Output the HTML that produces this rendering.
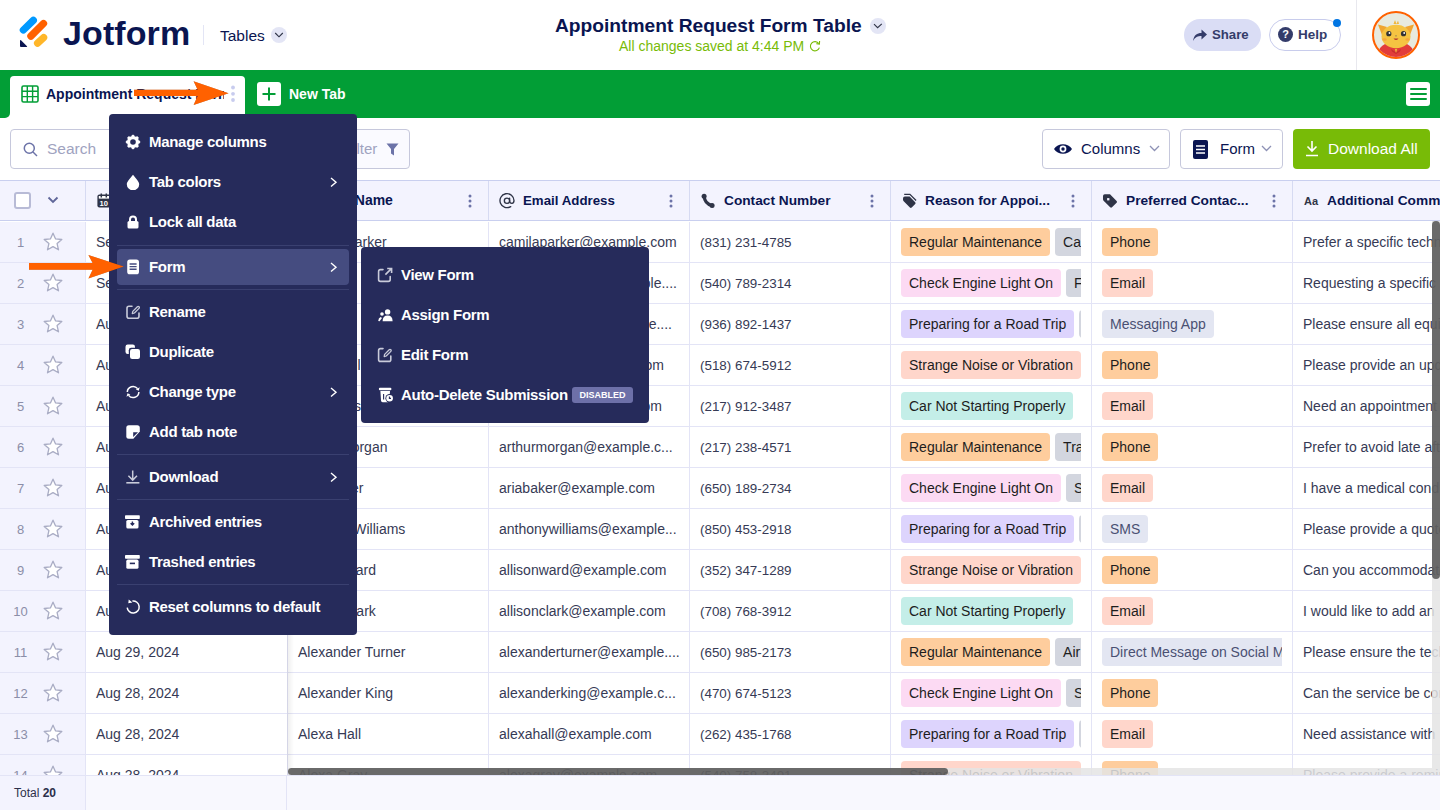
<!DOCTYPE html><html><head><meta charset="utf-8"><style>
*{box-sizing:border-box;margin:0;padding:0}
html,body{width:1440px;height:810px;overflow:hidden}
body{position:relative;font-family:"Liberation Sans",sans-serif;background:#fff;color:#0A1551}
.a{position:absolute}
.nw{white-space:nowrap}
svg{display:block}
/* header */
#hdr{left:0;top:0;width:1440px;height:70px;background:#fff}
#green{left:0;top:70px;width:1440px;height:48px;background:#029E36}
/* toolbar */
.btn{position:absolute;top:129px;height:40px;border:1px solid #C6C8DC;border-radius:4px;background:#fff}
/* table */
#thead{left:0;top:180px;width:1440px;height:41px;background:#F3F3FE;border-top:1px solid #C9CFEF;border-bottom:1px solid #C9CFEF}
.row{position:absolute;left:0;width:1440px;height:41px;border-bottom:1px solid #E3E4F6;background:#fff}
.rn{position:absolute;left:0;top:0;width:86px;height:40px;background:#F3F3FE;border-right:1px solid #E3E4F6}
.cd{position:absolute;top:0;height:40px;border-right:1px solid #E3E4F6}
.ct{position:absolute;top:12px;font-size:14px;color:#363A55;white-space:nowrap;line-height:17px}
.hl{position:absolute;top:12px;font-size:14px;font-weight:700;color:#0A1551;white-space:nowrap;line-height:17px}
.tags{position:absolute;top:6px;left:0;display:flex;gap:5px;white-space:nowrap}
.tag{flex:none;height:28px;border-radius:4px;font-size:14px;line-height:28px;color:#1D1D1D;padding:0 8px;white-space:nowrap}
/* menu */
.menu{position:absolute;background:#262B5B;border-radius:4px}
.mi{position:absolute;left:0;height:40px;width:100%;color:#fff;font-weight:700;font-size:15px;letter-spacing:-0.3px;white-space:nowrap}
.mi span.t{position:absolute;left:40px;top:11px;line-height:18px}
.sep{position:absolute;left:8px;right:8px;height:1px;background:#3A4070}
</style></head><body>
<div id="hdr" class="a"></div>
<div class="a" style="left:0;top:0"><svg width="60" height="60" viewBox="0 0 60 60" ><path d="M23.4 30 L33.3 20.4" stroke="#0099FF" stroke-width="7.3" stroke-linecap="round"/><path d="M30.9 36.1 L43.5 23.5" stroke="#FF6100" stroke-width="7.3" stroke-linecap="round"/><path d="M37.6 43.2 L43.6 37.6" stroke="#FFB629" stroke-width="7.3" stroke-linecap="round"/><path d="M21 40.2 Q20 39.8 20 41 L20 46 Q20 47 21 47 L26.5 47 Q27.6 47 27 46.2 Z" fill="#0A1551"/></svg></div>
<div class="a nw" style="left:63px;top:13px;font-size:34px;font-weight:700;color:#0A1551;letter-spacing:0.1px;line-height:40px">Jotform</div>
<div class="a" style="left:203px;top:25px;width:1px;height:20px;background:#E3E5F5"></div>
<div class="a nw" style="left:220px;top:27px;font-size:15.5px;color:#0A1551;line-height:18px">Tables</div>
<div class="a" style="left:271px;top:27px;width:16px;height:16px;border-radius:50%;background:#E3E5F5"></div>
<div class="a" style="left:274px;top:31px"><svg width="10" height="8" viewBox="0 0 10 8" ><path d="M1.2 2 L5 5.8 L8.8 2" stroke="#2F3447" stroke-width="1.15" fill="none"/></svg></div>
<div class="a nw" style="left:555px;top:15px;font-size:19.2px;font-weight:700;color:#0A1551;line-height:22px">Appointment Request Form Table</div>
<div class="a" style="left:870px;top:18px;width:16px;height:16px;border-radius:50%;background:#E3E5F5"></div>
<div class="a" style="left:873px;top:22px"><svg width="10" height="8" viewBox="0 0 10 8" ><path d="M1 2.2 L4.6 5.6 L8.8 1.9" stroke="#2F3447" stroke-width="1.15" fill="none"/></svg></div>
<div class="a nw" style="left:619px;top:38px;font-size:14px;color:#78BB07;line-height:16px">All changes saved at 4:44 PM</div>
<div class="a" style="left:809px;top:40px"><svg width="12" height="12" viewBox="0 0 12 12" ><path d="M9.8 3.6 A4.6 4.6 0 1 0 10.4 7.6" stroke="#78BB07" stroke-width="1.1" fill="none"/><path d="M10.6 1 L10.4 4.2 L7.4 3.6" stroke="#78BB07" stroke-width="1.1" fill="none"/></svg></div>
<div class="a" style="left:1184px;top:19px;width:77px;height:32px;border-radius:16px;background:#DADDF5"></div>
<div class="a" style="left:1192px;top:28px"><svg width="16" height="14" viewBox="0 0 16 14" ><path d="M1 13 C2 7 5 5 9.5 5 L9.5 1.5 L15 6.5 L9.5 11.5 L9.5 8 C6 8 3 9 1 13 Z" fill="#343C6A"/></svg></div>
<div class="a nw" style="left:1212px;top:27px;font-size:13.2px;font-weight:700;color:#343C6A;line-height:16px">Share</div>
<div class="a" style="left:1269px;top:19px;width:72px;height:32px;border-radius:16px;background:#fff;border:1px solid #C8CCEC"></div>
<div class="a" style="left:1278px;top:27px;width:15px;height:15px;border-radius:50%;background:#343C6A;color:#fff;font-size:11px;font-weight:700;text-align:center;line-height:15px">?</div>
<div class="a nw" style="left:1298px;top:27px;font-size:13.5px;font-weight:700;color:#343C6A;line-height:16px">Help</div>
<div class="a" style="left:1333px;top:19px;width:8px;height:8px;border-radius:50%;background:#0075E3"></div>
<div class="a" style="left:1356px;top:0;width:1px;height:70px;background:#E8E8EE"></div>
<div class="a" style="left:1372px;top:11px"><svg width="48" height="48" viewBox="0 0 48 48" ><circle cx="24" cy="24" r="23" fill="#E8EADF" stroke="#FF6100" stroke-width="2"/><clipPath id="av"><circle cx="24" cy="24" r="22"/></clipPath><g clip-path="url(#av)"><path d="M5 48 Q5 31 24 31 Q43 31 43 48 Z" fill="#E23C3A"/><path d="M6 13.5 L15 16 L10 24 Z" fill="#F0A531"/><path d="M42 13.5 L33 16 L38 24 Z" fill="#F0A531"/><path d="M21.5 13 L23 9 L24.5 13 L26 9.5 L27 13 Z" fill="#F0B73A"/><ellipse cx="24" cy="25.5" rx="14.5" ry="11.8" fill="#F5C342"/><ellipse cx="12.5" cy="28.5" rx="2.2" ry="1.2" fill="#F6A53E"/><ellipse cx="35.5" cy="28.5" rx="2.2" ry="1.2" fill="#F6A53E"/><circle cx="16.8" cy="22.7" r="2.6" fill="#333"/><circle cx="31.5" cy="22.7" r="2.6" fill="#333"/><circle cx="17.5" cy="22" r="0.9" fill="#fff"/><circle cx="32.2" cy="22" r="0.9" fill="#fff"/><path d="M23.2 25.2 L24 24 L24.8 25.2 Z" fill="#555"/><path d="M21.5 27.5 Q24 30.5 26.5 27.5 Z" fill="#B23A2E"/><path d="M19 38 L24 41.5 L29 38 L28 40.5 L24 43 L20 40.5 Z" fill="#C62F2C"/><path d="M22.8 38 L24 42 L25.2 38 Z" fill="#F0B73A"/></g></svg></div>
<div id="green" class="a"></div>
<div class="a" style="left:10px;top:76px;width:235px;height:42px;background:#fff;border-radius:4px 4px 0 0"></div>
<div class="a" style="left:4px;top:110px;width:8px;height:8px;background:#fff"></div>
<div class="a" style="left:0;top:100px;width:10px;height:18px;background:#029E36;border-bottom-right-radius:5px"></div>
<div class="a" style="left:21px;top:85px"><svg width="18" height="18" viewBox="0 0 18 18" ><rect x="1" y="1" width="16" height="16" rx="1.5" fill="none" stroke="#029E36" stroke-width="1.6"/><path d="M1 6.3 H17 M1 11.6 H17 M6.3 1 V17 M11.6 1 V17" stroke="#029E36" stroke-width="1.4"/></svg></div>
<div class="a nw" style="left:46px;top:86px;width:178px;overflow:hidden;font-size:14px;font-weight:700;color:#0A1551;line-height:17px">Appointment Request Form</div>
<div class="a" style="left:230px;top:85px"><svg width="6" height="17" viewBox="0 0 6 17" ><circle cx="3" cy="2.5" r="1.9" fill="#C8CCEE"/><circle cx="3" cy="8.8" r="1.9" fill="#C8CCEE"/><circle cx="3" cy="15" r="1.9" fill="#C8CCEE"/></svg></div>
<div class="a" style="left:257px;top:82px;width:24px;height:24px;border-radius:3px;background:#fff"></div>
<div class="a" style="left:261px;top:86px"><svg width="16" height="16" viewBox="0 0 16 16" ><path d="M8 1.5 V14.5 M1.5 8 H14.5" stroke="#029E36" stroke-width="2"/></svg></div>
<div class="a nw" style="left:289px;top:86px;font-size:14px;font-weight:700;color:#fff;line-height:17px">New Tab</div>
<div class="a" style="left:1406px;top:82px;width:24px;height:24px;border-radius:3px;background:#fff"></div>
<div class="a" style="left:1410px;top:88px"><svg width="17" height="13" viewBox="0 0 17 13" ><path d="M1 1 H16 M1 6 H16 M1 11 H16" stroke="#029E36" stroke-width="2" stroke-linecap="round"/></svg></div>
<div class="btn" style="left:10px;width:300px"></div>
<div class="a" style="left:23px;top:142px"><svg width="15" height="15" viewBox="0 0 15 15" ><circle cx="6.3" cy="6.3" r="5" fill="none" stroke="#6C73A8" stroke-width="1.5"/><path d="M10 10 L14 14" stroke="#6C73A8" stroke-width="1.5"/></svg></div>
<div class="a nw" style="left:47px;top:140px;font-size:15.5px;color:#A0A3BF;line-height:18px">Search</div>
<div class="btn" style="left:309px;width:101px;background:#FAFAFF"></div>
<div class="a nw" style="left:344px;top:140px;font-size:15px;color:#A0A3BF;line-height:18px">Filter</div>
<div class="a" style="left:386px;top:143px"><svg width="13" height="13" viewBox="0 0 13 13" ><path d="M0.5 0.5 H12.5 L8 6 V12.5 L5 10.5 V6 Z" fill="#6C73A8"/></svg></div>
<div class="btn" style="left:1042px;width:128px"></div>
<div class="a" style="left:1053px;top:142px"><svg width="20" height="14" viewBox="0 0 20 14" ><path d="M1 7 C4.5 0.6 15.5 0.6 19 7 C15.5 13.4 4.5 13.4 1 7 Z" fill="#0A1551"/><circle cx="10" cy="7" r="3.4" fill="#fff"/><circle cx="10" cy="7" r="1.7" fill="#0A1551"/></svg></div>
<div class="a nw" style="left:1081px;top:140px;font-size:15px;color:#0A1551;line-height:18px">Columns</div>
<div class="a" style="left:1149px;top:145px"><svg width="11" height="7" viewBox="0 0 11 7" ><path d="M1 1 L5.5 5.5 L10 1" stroke="#8D91B5" stroke-width="1.3" fill="none"/></svg></div>
<div class="btn" style="left:1180px;width:103px"></div>
<div class="a" style="left:1193px;top:140px;width:15px;height:19px;border-radius:2px;background:#0A1551"></div>
<div class="a" style="left:1196px;top:145px"><svg width="9" height="9" viewBox="0 0 9 9" ><path d="M0 1 H9 M0 4.5 H9 M0 8 H9" stroke="#fff" stroke-width="1.5"/></svg></div>
<div class="a nw" style="left:1220px;top:140px;font-size:15px;color:#0A1551;line-height:18px">Form</div>
<div class="a" style="left:1261px;top:145px"><svg width="11" height="7" viewBox="0 0 11 7" ><path d="M1 1 L5.5 5.5 L10 1" stroke="#8D91B5" stroke-width="1.3" fill="none"/></svg></div>
<div class="a" style="left:1293px;top:129px;width:137px;height:40px;border-radius:4px;background:#78BB07"></div>
<div class="a" style="left:1305px;top:140px"><svg width="14" height="17" viewBox="0 0 14 17" ><path d="M7 1 V11 M2.5 6.5 L7 11 L11.5 6.5 M1 15.5 H13" stroke="#fff" stroke-width="1.6" fill="none"/></svg></div>
<div class="a nw" style="left:1328px;top:140px;font-size:15.5px;color:#fff;line-height:18px">Download All</div>
<div id="thead" class="a"></div>
<div class="a" style="left:287px;top:181px;width:1px;height:39px;background:#D6DAF2"></div>
<div class="a" style="left:488px;top:181px;width:1px;height:39px;background:#D6DAF2"></div>
<div class="a" style="left:689px;top:181px;width:1px;height:39px;background:#D6DAF2"></div>
<div class="a" style="left:890px;top:181px;width:1px;height:39px;background:#D6DAF2"></div>
<div class="a" style="left:1091px;top:181px;width:1px;height:39px;background:#D6DAF2"></div>
<div class="a" style="left:1292px;top:181px;width:1px;height:39px;background:#D6DAF2"></div>
<div class="a" style="left:85px;top:181px;width:1px;height:39px;background:#D6DAF2"></div>
<div class="a" style="left:14px;top:192px;width:17px;height:17px;border:2px solid #B8BBD6;border-radius:3px;background:#fff"></div>
<div class="a" style="left:47px;top:196px"><svg width="12" height="8" viewBox="0 0 12 8" ><path d="M1.5 1.5 L6 6 L10.5 1.5" stroke="#5F6699" stroke-width="1.8" fill="none"/></svg></div>
<div class="a" style="left:97px;top:193px"><svg width="14" height="15" viewBox="0 0 14 15" ><rect x="0.4" y="1.6" width="13.2" height="13" rx="2" fill="#2F3447"/><rect x="1.8" y="3" width="10.4" height="2.6" fill="#fff"/><path d="M4.3 0.4 V4.6 M9.3 0.4 V4.6" stroke="#2F3447" stroke-width="1.5"/><text x="6.8" y="13.2" font-size="7.6" font-weight="700" fill="#fff" text-anchor="middle" font-family="Liberation Sans">10</text></svg></div>
<div class="a nw" style="left:125px;top:192px;font-size:14px;font-weight:700;color:#0A1551;line-height:17px">Date</div>
<div class="a nw" style="left:326px;top:192px;font-size:14px;font-weight:700;color:#0A1551;line-height:17px">Full Name</div>
<div class="a" style="left:498px;top:192px"><svg width="18" height="18" viewBox="0 0 18 18" ><path d="M12.7 14.6 A7 7 0 1 1 16 8.6 Q16 11.3 14 11.3 Q11.6 11.3 11.6 9 V6.2" stroke="#2F3447" stroke-width="1.35" fill="none" stroke-linecap="round"/><circle cx="9" cy="8.7" r="2.65" stroke="#2F3447" stroke-width="1.35" fill="none"/></svg></div>
<div class="a nw" style="left:523px;top:192px;font-size:13.3px;font-weight:700;color:#0A1551;line-height:17px">Email Address</div>
<div class="a" style="left:700px;top:193px"><svg width="16" height="16" viewBox="0 0 16 16" ><path d="M4.2 3.4 Q4.6 10.6 12 12.6" stroke="#2F3447" stroke-width="3.2" fill="none" stroke-linecap="round"/><circle cx="4.1" cy="3.3" r="2.5" fill="#2F3447"/><circle cx="12.1" cy="12.6" r="2.5" fill="#2F3447"/></svg></div>
<div class="a nw" style="left:724px;top:192px;font-size:13.7px;font-weight:700;color:#0A1551;line-height:17px">Contact Number</div>
<div class="a" style="left:900px;top:190px"><svg width="18" height="20" viewBox="0 0 18 20" ><path d="M3 8.5 Q3 6.6 4.9 6.6 L9.6 6.6 L15.2 12.2 Q16 13.1 15.2 14 L11.7 17.5 Q10.8 18.4 9.9 17.5 L3.7 11.3 Q3 10.6 3 9.7 Z" fill="#2F3447"/><path d="M4.2 4.3 H9.9 L16.1 10.5" stroke="#2F3447" stroke-width="1.3" fill="none"/></svg></div>
<div class="a nw" style="left:925px;top:192px;font-size:13.7px;font-weight:700;color:#0A1551;line-height:17px">Reason for Appoi...</div>
<div class="a" style="left:1100px;top:190px"><svg width="18" height="20" viewBox="0 0 18 20" ><path d="M3 6.1 Q3 4.3 4.8 4.3 L10 4.3 L16.6 10.9 Q17.5 11.8 16.6 12.7 L12 17.3 Q11.1 18.2 10.2 17.3 L3.6 10.7 Q3 10.1 3 9.2 Z" fill="#2F3447"/><rect x="7.1" y="8.1" width="2.3" height="2.3" fill="#F3F3FE"/></svg></div>
<div class="a nw" style="left:1126px;top:192px;font-size:13.7px;font-weight:700;color:#0A1551;line-height:17px">Preferred Contac...</div>
<div class="a nw" style="left:1304px;top:195px;font-size:11px;font-weight:700;color:#2F3447;line-height:13px">Aa</div>
<div class="a nw" style="left:1327px;top:192px;font-size:13.7px;font-weight:700;color:#0A1551;line-height:17px">Additional Comments</div>
<div class="a" style="left:267px;top:194px"><svg width="4" height="14" viewBox="0 0 4 14" ><circle cx="2" cy="2" r="1.5" fill="#6C73A8"/><circle cx="2" cy="7" r="1.5" fill="#6C73A8"/><circle cx="2" cy="12" r="1.5" fill="#6C73A8"/></svg></div>
<div class="a" style="left:468px;top:194px"><svg width="4" height="14" viewBox="0 0 4 14" ><circle cx="2" cy="2" r="1.5" fill="#6C73A8"/><circle cx="2" cy="7" r="1.5" fill="#6C73A8"/><circle cx="2" cy="12" r="1.5" fill="#6C73A8"/></svg></div>
<div class="a" style="left:669px;top:194px"><svg width="4" height="14" viewBox="0 0 4 14" ><circle cx="2" cy="2" r="1.5" fill="#6C73A8"/><circle cx="2" cy="7" r="1.5" fill="#6C73A8"/><circle cx="2" cy="12" r="1.5" fill="#6C73A8"/></svg></div>
<div class="a" style="left:870px;top:194px"><svg width="4" height="14" viewBox="0 0 4 14" ><circle cx="2" cy="2" r="1.5" fill="#6C73A8"/><circle cx="2" cy="7" r="1.5" fill="#6C73A8"/><circle cx="2" cy="12" r="1.5" fill="#6C73A8"/></svg></div>
<div class="a" style="left:1071px;top:194px"><svg width="4" height="14" viewBox="0 0 4 14" ><circle cx="2" cy="2" r="1.5" fill="#6C73A8"/><circle cx="2" cy="7" r="1.5" fill="#6C73A8"/><circle cx="2" cy="12" r="1.5" fill="#6C73A8"/></svg></div>
<div class="a" style="left:1272px;top:194px"><svg width="4" height="14" viewBox="0 0 4 14" ><circle cx="2" cy="2" r="1.5" fill="#6C73A8"/><circle cx="2" cy="7" r="1.5" fill="#6C73A8"/><circle cx="2" cy="12" r="1.5" fill="#6C73A8"/></svg></div>
<div class="a" style="left:0;top:222px;width:1440px;height:553px;overflow:hidden">
<div class="row" style="top:0px">
<div class="rn"></div>
<div class="a nw" style="left:0;width:41px;top:12px;text-align:center;font-size:13px;color:#8B8EA8;line-height:17px">1</div>
<div class="a" style="left:43px;top:10px"><svg width="20" height="19" viewBox="0 0 20 19" ><path d="M10 1.2 L12.6 6.9 L18.8 7.5 L14.1 11.6 L15.5 17.8 L10 14.6 L4.5 17.8 L5.9 11.6 L1.2 7.5 L7.4 6.9 Z" fill="#fff" stroke="#A9ACC4" stroke-width="1.3" stroke-linejoin="round"/></svg></div>
<div class="a" style="left:287px;top:0;width:1px;height:40px;background:#E3E4F6"></div>
<div class="a" style="left:488px;top:0;width:1px;height:40px;background:#E3E4F6"></div>
<div class="a" style="left:689px;top:0;width:1px;height:40px;background:#E3E4F6"></div>
<div class="a" style="left:890px;top:0;width:1px;height:40px;background:#E3E4F6"></div>
<div class="a" style="left:1091px;top:0;width:1px;height:40px;background:#E3E4F6"></div>
<div class="a" style="left:1292px;top:0;width:1px;height:40px;background:#E3E4F6"></div>
<div class="ct" style="left:96px">Sep 11, 2024</div>
<div class="ct" style="left:298px">Camila Parker</div>
<div class="ct" style="left:499px;width:182px;overflow:hidden">camilaparker@example.com</div>
<div class="ct" style="left:700px;font-size:13.4px">(831) 231-4785</div>
<div class="a" style="left:901px;top:0;width:180px;height:40px;overflow:hidden"><div class="tags">
<div class="tag" style="background:#FECD9D">Regular Maintenance</div>
<div class="tag" style="background:#D3D6DF">Car Wash</div>
</div></div>
<div class="a" style="left:1102px;top:0;width:180px;height:40px;overflow:hidden"><div class="tags">
<div class="tag" style="background:#FECD9D;color:#1D1D1D">Phone</div>
</div></div>
<div class="ct" style="left:1303px">Prefer a specific technician</div>
</div>
<div class="row" style="top:41px">
<div class="rn"></div>
<div class="a nw" style="left:0;width:41px;top:12px;text-align:center;font-size:13px;color:#8B8EA8;line-height:17px">2</div>
<div class="a" style="left:43px;top:10px"><svg width="20" height="19" viewBox="0 0 20 19" ><path d="M10 1.2 L12.6 6.9 L18.8 7.5 L14.1 11.6 L15.5 17.8 L10 14.6 L4.5 17.8 L5.9 11.6 L1.2 7.5 L7.4 6.9 Z" fill="#fff" stroke="#A9ACC4" stroke-width="1.3" stroke-linejoin="round"/></svg></div>
<div class="a" style="left:287px;top:0;width:1px;height:40px;background:#E3E4F6"></div>
<div class="a" style="left:488px;top:0;width:1px;height:40px;background:#E3E4F6"></div>
<div class="a" style="left:689px;top:0;width:1px;height:40px;background:#E3E4F6"></div>
<div class="a" style="left:890px;top:0;width:1px;height:40px;background:#E3E4F6"></div>
<div class="a" style="left:1091px;top:0;width:1px;height:40px;background:#E3E4F6"></div>
<div class="a" style="left:1292px;top:0;width:1px;height:40px;background:#E3E4F6"></div>
<div class="ct" style="left:96px">Sep 10, 2024</div>
<div class="ct" style="left:298px">Ava Fox</div>
<div class="ct" style="left:377px;width:300px;text-align:right">cameronscott@example....</div>
<div class="ct" style="left:700px;font-size:13.4px">(540) 789-2314</div>
<div class="a" style="left:901px;top:0;width:180px;height:40px;overflow:hidden"><div class="tags">
<div class="tag" style="background:#FCDAF3">Check Engine Light On</div>
<div class="tag" style="background:#D3D6DF">Fluids</div>
</div></div>
<div class="a" style="left:1102px;top:0;width:180px;height:40px;overflow:hidden"><div class="tags">
<div class="tag" style="background:#FFD6CB;color:#1D1D1D">Email</div>
</div></div>
<div class="ct" style="left:1303px">Requesting a specific time</div>
</div>
<div class="row" style="top:82px">
<div class="rn"></div>
<div class="a nw" style="left:0;width:41px;top:12px;text-align:center;font-size:13px;color:#8B8EA8;line-height:17px">3</div>
<div class="a" style="left:43px;top:10px"><svg width="20" height="19" viewBox="0 0 20 19" ><path d="M10 1.2 L12.6 6.9 L18.8 7.5 L14.1 11.6 L15.5 17.8 L10 14.6 L4.5 17.8 L5.9 11.6 L1.2 7.5 L7.4 6.9 Z" fill="#fff" stroke="#A9ACC4" stroke-width="1.3" stroke-linejoin="round"/></svg></div>
<div class="a" style="left:287px;top:0;width:1px;height:40px;background:#E3E4F6"></div>
<div class="a" style="left:488px;top:0;width:1px;height:40px;background:#E3E4F6"></div>
<div class="a" style="left:689px;top:0;width:1px;height:40px;background:#E3E4F6"></div>
<div class="a" style="left:890px;top:0;width:1px;height:40px;background:#E3E4F6"></div>
<div class="a" style="left:1091px;top:0;width:1px;height:40px;background:#E3E4F6"></div>
<div class="a" style="left:1292px;top:0;width:1px;height:40px;background:#E3E4F6"></div>
<div class="ct" style="left:96px">Aug 31, 2024</div>
<div class="ct" style="left:298px">Bo Li</div>
<div class="ct" style="left:372px;width:300px;text-align:right">benjaminhill@example....</div>
<div class="ct" style="left:700px;font-size:13.4px">(936) 892-1437</div>
<div class="a" style="left:901px;top:0;width:180px;height:40px;overflow:hidden"><div class="tags">
<div class="tag" style="background:#DDD4FD">Preparing for a Road Trip</div>
<div class="tag" style="background:#D3D6DF">Oil</div>
</div></div>
<div class="a" style="left:1102px;top:0;width:180px;height:40px;overflow:hidden"><div class="tags">
<div class="tag" style="background:#E3E6F2;color:#4A5072">Messaging App</div>
</div></div>
<div class="ct" style="left:1303px">Please ensure all equipment</div>
</div>
<div class="row" style="top:123px">
<div class="rn"></div>
<div class="a nw" style="left:0;width:41px;top:12px;text-align:center;font-size:13px;color:#8B8EA8;line-height:17px">4</div>
<div class="a" style="left:43px;top:10px"><svg width="20" height="19" viewBox="0 0 20 19" ><path d="M10 1.2 L12.6 6.9 L18.8 7.5 L14.1 11.6 L15.5 17.8 L10 14.6 L4.5 17.8 L5.9 11.6 L1.2 7.5 L7.4 6.9 Z" fill="#fff" stroke="#A9ACC4" stroke-width="1.3" stroke-linejoin="round"/></svg></div>
<div class="a" style="left:287px;top:0;width:1px;height:40px;background:#E3E4F6"></div>
<div class="a" style="left:488px;top:0;width:1px;height:40px;background:#E3E4F6"></div>
<div class="a" style="left:689px;top:0;width:1px;height:40px;background:#E3E4F6"></div>
<div class="a" style="left:890px;top:0;width:1px;height:40px;background:#E3E4F6"></div>
<div class="a" style="left:1091px;top:0;width:1px;height:40px;background:#E3E4F6"></div>
<div class="a" style="left:1292px;top:0;width:1px;height:40px;background:#E3E4F6"></div>
<div class="ct" style="left:96px">Aug 31, 2024</div>
<div class="ct" style="left:60.5px;width:300px;text-align:right">Ava Mitchell</div>
<div class="ct" style="left:364px;width:300px;text-align:right">avamitchell@example.com</div>
<div class="ct" style="left:700px;font-size:13.4px">(518) 674-5912</div>
<div class="a" style="left:901px;top:0;width:180px;height:40px;overflow:hidden"><div class="tags">
<div class="tag" style="background:#FFD6CB">Strange Noise or Vibration</div>
</div></div>
<div class="a" style="left:1102px;top:0;width:180px;height:40px;overflow:hidden"><div class="tags">
<div class="tag" style="background:#FECD9D;color:#1D1D1D">Phone</div>
</div></div>
<div class="ct" style="left:1303px">Please provide an update</div>
</div>
<div class="row" style="top:164px">
<div class="rn"></div>
<div class="a nw" style="left:0;width:41px;top:12px;text-align:center;font-size:13px;color:#8B8EA8;line-height:17px">5</div>
<div class="a" style="left:43px;top:10px"><svg width="20" height="19" viewBox="0 0 20 19" ><path d="M10 1.2 L12.6 6.9 L18.8 7.5 L14.1 11.6 L15.5 17.8 L10 14.6 L4.5 17.8 L5.9 11.6 L1.2 7.5 L7.4 6.9 Z" fill="#fff" stroke="#A9ACC4" stroke-width="1.3" stroke-linejoin="round"/></svg></div>
<div class="a" style="left:287px;top:0;width:1px;height:40px;background:#E3E4F6"></div>
<div class="a" style="left:488px;top:0;width:1px;height:40px;background:#E3E4F6"></div>
<div class="a" style="left:689px;top:0;width:1px;height:40px;background:#E3E4F6"></div>
<div class="a" style="left:890px;top:0;width:1px;height:40px;background:#E3E4F6"></div>
<div class="a" style="left:1091px;top:0;width:1px;height:40px;background:#E3E4F6"></div>
<div class="a" style="left:1292px;top:0;width:1px;height:40px;background:#E3E4F6"></div>
<div class="ct" style="left:96px">Aug 30, 2024</div>
<div class="ct" style="left:61px;width:300px;text-align:right">Audrey Hughes</div>
<div class="ct" style="left:362px;width:300px;text-align:right">audreyhughes@example.com</div>
<div class="ct" style="left:700px;font-size:13.4px">(217) 912-3487</div>
<div class="a" style="left:901px;top:0;width:180px;height:40px;overflow:hidden"><div class="tags">
<div class="tag" style="background:#C4EEE8">Car Not Starting Properly</div>
</div></div>
<div class="a" style="left:1102px;top:0;width:180px;height:40px;overflow:hidden"><div class="tags">
<div class="tag" style="background:#FFD6CB;color:#1D1D1D">Email</div>
</div></div>
<div class="ct" style="left:1303px">Need an appointment soon</div>
</div>
<div class="row" style="top:205px">
<div class="rn"></div>
<div class="a nw" style="left:0;width:41px;top:12px;text-align:center;font-size:13px;color:#8B8EA8;line-height:17px">6</div>
<div class="a" style="left:43px;top:10px"><svg width="20" height="19" viewBox="0 0 20 19" ><path d="M10 1.2 L12.6 6.9 L18.8 7.5 L14.1 11.6 L15.5 17.8 L10 14.6 L4.5 17.8 L5.9 11.6 L1.2 7.5 L7.4 6.9 Z" fill="#fff" stroke="#A9ACC4" stroke-width="1.3" stroke-linejoin="round"/></svg></div>
<div class="a" style="left:287px;top:0;width:1px;height:40px;background:#E3E4F6"></div>
<div class="a" style="left:488px;top:0;width:1px;height:40px;background:#E3E4F6"></div>
<div class="a" style="left:689px;top:0;width:1px;height:40px;background:#E3E4F6"></div>
<div class="a" style="left:890px;top:0;width:1px;height:40px;background:#E3E4F6"></div>
<div class="a" style="left:1091px;top:0;width:1px;height:40px;background:#E3E4F6"></div>
<div class="a" style="left:1292px;top:0;width:1px;height:40px;background:#E3E4F6"></div>
<div class="ct" style="left:96px">Aug 30, 2024</div>
<div class="ct" style="left:298px">Arthur Morgan</div>
<div class="ct" style="left:499px;width:182px;overflow:hidden">arthurmorgan@example.c...</div>
<div class="ct" style="left:700px;font-size:13.4px">(217) 238-4571</div>
<div class="a" style="left:901px;top:0;width:180px;height:40px;overflow:hidden"><div class="tags">
<div class="tag" style="background:#FECD9D">Regular Maintenance</div>
<div class="tag" style="background:#D3D6DF">Transmission</div>
</div></div>
<div class="a" style="left:1102px;top:0;width:180px;height:40px;overflow:hidden"><div class="tags">
<div class="tag" style="background:#FECD9D;color:#1D1D1D">Phone</div>
</div></div>
<div class="ct" style="left:1303px">Prefer to avoid late afternoon</div>
</div>
<div class="row" style="top:246px">
<div class="rn"></div>
<div class="a nw" style="left:0;width:41px;top:12px;text-align:center;font-size:13px;color:#8B8EA8;line-height:17px">7</div>
<div class="a" style="left:43px;top:10px"><svg width="20" height="19" viewBox="0 0 20 19" ><path d="M10 1.2 L12.6 6.9 L18.8 7.5 L14.1 11.6 L15.5 17.8 L10 14.6 L4.5 17.8 L5.9 11.6 L1.2 7.5 L7.4 6.9 Z" fill="#fff" stroke="#A9ACC4" stroke-width="1.3" stroke-linejoin="round"/></svg></div>
<div class="a" style="left:287px;top:0;width:1px;height:40px;background:#E3E4F6"></div>
<div class="a" style="left:488px;top:0;width:1px;height:40px;background:#E3E4F6"></div>
<div class="a" style="left:689px;top:0;width:1px;height:40px;background:#E3E4F6"></div>
<div class="a" style="left:890px;top:0;width:1px;height:40px;background:#E3E4F6"></div>
<div class="a" style="left:1091px;top:0;width:1px;height:40px;background:#E3E4F6"></div>
<div class="a" style="left:1292px;top:0;width:1px;height:40px;background:#E3E4F6"></div>
<div class="ct" style="left:96px">Aug 30, 2024</div>
<div class="ct" style="left:298px">Aria Baker</div>
<div class="ct" style="left:499px;width:182px;overflow:hidden">ariabaker@example.com</div>
<div class="ct" style="left:700px;font-size:13.4px">(650) 189-2734</div>
<div class="a" style="left:901px;top:0;width:180px;height:40px;overflow:hidden"><div class="tags">
<div class="tag" style="background:#FCDAF3">Check Engine Light On</div>
<div class="tag" style="background:#D3D6DF">Service</div>
</div></div>
<div class="a" style="left:1102px;top:0;width:180px;height:40px;overflow:hidden"><div class="tags">
<div class="tag" style="background:#FFD6CB;color:#1D1D1D">Email</div>
</div></div>
<div class="ct" style="left:1303px">I have a medical condition</div>
</div>
<div class="row" style="top:287px">
<div class="rn"></div>
<div class="a nw" style="left:0;width:41px;top:12px;text-align:center;font-size:13px;color:#8B8EA8;line-height:17px">8</div>
<div class="a" style="left:43px;top:10px"><svg width="20" height="19" viewBox="0 0 20 19" ><path d="M10 1.2 L12.6 6.9 L18.8 7.5 L14.1 11.6 L15.5 17.8 L10 14.6 L4.5 17.8 L5.9 11.6 L1.2 7.5 L7.4 6.9 Z" fill="#fff" stroke="#A9ACC4" stroke-width="1.3" stroke-linejoin="round"/></svg></div>
<div class="a" style="left:287px;top:0;width:1px;height:40px;background:#E3E4F6"></div>
<div class="a" style="left:488px;top:0;width:1px;height:40px;background:#E3E4F6"></div>
<div class="a" style="left:689px;top:0;width:1px;height:40px;background:#E3E4F6"></div>
<div class="a" style="left:890px;top:0;width:1px;height:40px;background:#E3E4F6"></div>
<div class="a" style="left:1091px;top:0;width:1px;height:40px;background:#E3E4F6"></div>
<div class="a" style="left:1292px;top:0;width:1px;height:40px;background:#E3E4F6"></div>
<div class="ct" style="left:96px">Aug 29, 2024</div>
<div class="ct" style="left:298px">Anthony Williams</div>
<div class="ct" style="left:499px;width:182px;overflow:hidden">anthonywilliams@example...</div>
<div class="ct" style="left:700px;font-size:13.4px">(850) 453-2918</div>
<div class="a" style="left:901px;top:0;width:180px;height:40px;overflow:hidden"><div class="tags">
<div class="tag" style="background:#DDD4FD">Preparing for a Road Trip</div>
<div class="tag" style="background:#D3D6DF">Oil</div>
</div></div>
<div class="a" style="left:1102px;top:0;width:180px;height:40px;overflow:hidden"><div class="tags">
<div class="tag" style="background:#E3E6F2;color:#4A5072">SMS</div>
</div></div>
<div class="ct" style="left:1303px">Please provide a quote</div>
</div>
<div class="row" style="top:328px">
<div class="rn"></div>
<div class="a nw" style="left:0;width:41px;top:12px;text-align:center;font-size:13px;color:#8B8EA8;line-height:17px">9</div>
<div class="a" style="left:43px;top:10px"><svg width="20" height="19" viewBox="0 0 20 19" ><path d="M10 1.2 L12.6 6.9 L18.8 7.5 L14.1 11.6 L15.5 17.8 L10 14.6 L4.5 17.8 L5.9 11.6 L1.2 7.5 L7.4 6.9 Z" fill="#fff" stroke="#A9ACC4" stroke-width="1.3" stroke-linejoin="round"/></svg></div>
<div class="a" style="left:287px;top:0;width:1px;height:40px;background:#E3E4F6"></div>
<div class="a" style="left:488px;top:0;width:1px;height:40px;background:#E3E4F6"></div>
<div class="a" style="left:689px;top:0;width:1px;height:40px;background:#E3E4F6"></div>
<div class="a" style="left:890px;top:0;width:1px;height:40px;background:#E3E4F6"></div>
<div class="a" style="left:1091px;top:0;width:1px;height:40px;background:#E3E4F6"></div>
<div class="a" style="left:1292px;top:0;width:1px;height:40px;background:#E3E4F6"></div>
<div class="ct" style="left:96px">Aug 29, 2024</div>
<div class="ct" style="left:298px">Allison Ward</div>
<div class="ct" style="left:499px;width:182px;overflow:hidden">allisonward@example.com</div>
<div class="ct" style="left:700px;font-size:13.4px">(352) 347-1289</div>
<div class="a" style="left:901px;top:0;width:180px;height:40px;overflow:hidden"><div class="tags">
<div class="tag" style="background:#FFD6CB">Strange Noise or Vibration</div>
</div></div>
<div class="a" style="left:1102px;top:0;width:180px;height:40px;overflow:hidden"><div class="tags">
<div class="tag" style="background:#FECD9D;color:#1D1D1D">Phone</div>
</div></div>
<div class="ct" style="left:1303px">Can you accommodate</div>
</div>
<div class="row" style="top:369px">
<div class="rn"></div>
<div class="a nw" style="left:0;width:41px;top:12px;text-align:center;font-size:13px;color:#8B8EA8;line-height:17px">10</div>
<div class="a" style="left:43px;top:10px"><svg width="20" height="19" viewBox="0 0 20 19" ><path d="M10 1.2 L12.6 6.9 L18.8 7.5 L14.1 11.6 L15.5 17.8 L10 14.6 L4.5 17.8 L5.9 11.6 L1.2 7.5 L7.4 6.9 Z" fill="#fff" stroke="#A9ACC4" stroke-width="1.3" stroke-linejoin="round"/></svg></div>
<div class="a" style="left:287px;top:0;width:1px;height:40px;background:#E3E4F6"></div>
<div class="a" style="left:488px;top:0;width:1px;height:40px;background:#E3E4F6"></div>
<div class="a" style="left:689px;top:0;width:1px;height:40px;background:#E3E4F6"></div>
<div class="a" style="left:890px;top:0;width:1px;height:40px;background:#E3E4F6"></div>
<div class="a" style="left:1091px;top:0;width:1px;height:40px;background:#E3E4F6"></div>
<div class="a" style="left:1292px;top:0;width:1px;height:40px;background:#E3E4F6"></div>
<div class="ct" style="left:96px">Aug 29, 2024</div>
<div class="ct" style="left:298px">Allison Clark</div>
<div class="ct" style="left:499px;width:182px;overflow:hidden">allisonclark@example.com</div>
<div class="ct" style="left:700px;font-size:13.4px">(708) 768-3912</div>
<div class="a" style="left:901px;top:0;width:180px;height:40px;overflow:hidden"><div class="tags">
<div class="tag" style="background:#C4EEE8">Car Not Starting Properly</div>
</div></div>
<div class="a" style="left:1102px;top:0;width:180px;height:40px;overflow:hidden"><div class="tags">
<div class="tag" style="background:#FFD6CB;color:#1D1D1D">Email</div>
</div></div>
<div class="ct" style="left:1303px">I would like to add an</div>
</div>
<div class="row" style="top:410px">
<div class="rn"></div>
<div class="a nw" style="left:0;width:41px;top:12px;text-align:center;font-size:13px;color:#8B8EA8;line-height:17px">11</div>
<div class="a" style="left:43px;top:10px"><svg width="20" height="19" viewBox="0 0 20 19" ><path d="M10 1.2 L12.6 6.9 L18.8 7.5 L14.1 11.6 L15.5 17.8 L10 14.6 L4.5 17.8 L5.9 11.6 L1.2 7.5 L7.4 6.9 Z" fill="#fff" stroke="#A9ACC4" stroke-width="1.3" stroke-linejoin="round"/></svg></div>
<div class="a" style="left:287px;top:0;width:1px;height:40px;background:#E3E4F6"></div>
<div class="a" style="left:488px;top:0;width:1px;height:40px;background:#E3E4F6"></div>
<div class="a" style="left:689px;top:0;width:1px;height:40px;background:#E3E4F6"></div>
<div class="a" style="left:890px;top:0;width:1px;height:40px;background:#E3E4F6"></div>
<div class="a" style="left:1091px;top:0;width:1px;height:40px;background:#E3E4F6"></div>
<div class="a" style="left:1292px;top:0;width:1px;height:40px;background:#E3E4F6"></div>
<div class="ct" style="left:96px">Aug 29, 2024</div>
<div class="ct" style="left:298px">Alexander Turner</div>
<div class="ct" style="left:499px;width:182px;overflow:hidden">alexanderturner@example....</div>
<div class="ct" style="left:700px;font-size:13.4px">(650) 985-2173</div>
<div class="a" style="left:901px;top:0;width:180px;height:40px;overflow:hidden"><div class="tags">
<div class="tag" style="background:#FECD9D">Regular Maintenance</div>
<div class="tag" style="background:#D3D6DF">Air Filter</div>
</div></div>
<div class="a" style="left:1102px;top:0;width:180px;height:40px;overflow:hidden"><div class="tags">
<div class="tag" style="background:#E3E6F2;color:#4A5072">Direct Message on Social Media</div>
</div></div>
<div class="ct" style="left:1303px">Please ensure the technician</div>
</div>
<div class="row" style="top:451px">
<div class="rn"></div>
<div class="a nw" style="left:0;width:41px;top:12px;text-align:center;font-size:13px;color:#8B8EA8;line-height:17px">12</div>
<div class="a" style="left:43px;top:10px"><svg width="20" height="19" viewBox="0 0 20 19" ><path d="M10 1.2 L12.6 6.9 L18.8 7.5 L14.1 11.6 L15.5 17.8 L10 14.6 L4.5 17.8 L5.9 11.6 L1.2 7.5 L7.4 6.9 Z" fill="#fff" stroke="#A9ACC4" stroke-width="1.3" stroke-linejoin="round"/></svg></div>
<div class="a" style="left:287px;top:0;width:1px;height:40px;background:#E3E4F6"></div>
<div class="a" style="left:488px;top:0;width:1px;height:40px;background:#E3E4F6"></div>
<div class="a" style="left:689px;top:0;width:1px;height:40px;background:#E3E4F6"></div>
<div class="a" style="left:890px;top:0;width:1px;height:40px;background:#E3E4F6"></div>
<div class="a" style="left:1091px;top:0;width:1px;height:40px;background:#E3E4F6"></div>
<div class="a" style="left:1292px;top:0;width:1px;height:40px;background:#E3E4F6"></div>
<div class="ct" style="left:96px">Aug 28, 2024</div>
<div class="ct" style="left:298px">Alexander King</div>
<div class="ct" style="left:499px;width:182px;overflow:hidden">alexanderking@example.c...</div>
<div class="ct" style="left:700px;font-size:13.4px">(470) 674-5123</div>
<div class="a" style="left:901px;top:0;width:180px;height:40px;overflow:hidden"><div class="tags">
<div class="tag" style="background:#FCDAF3">Check Engine Light On</div>
<div class="tag" style="background:#D3D6DF">Service</div>
</div></div>
<div class="a" style="left:1102px;top:0;width:180px;height:40px;overflow:hidden"><div class="tags">
<div class="tag" style="background:#FECD9D;color:#1D1D1D">Phone</div>
</div></div>
<div class="ct" style="left:1303px">Can the service be completed</div>
</div>
<div class="row" style="top:492px">
<div class="rn"></div>
<div class="a nw" style="left:0;width:41px;top:12px;text-align:center;font-size:13px;color:#8B8EA8;line-height:17px">13</div>
<div class="a" style="left:43px;top:10px"><svg width="20" height="19" viewBox="0 0 20 19" ><path d="M10 1.2 L12.6 6.9 L18.8 7.5 L14.1 11.6 L15.5 17.8 L10 14.6 L4.5 17.8 L5.9 11.6 L1.2 7.5 L7.4 6.9 Z" fill="#fff" stroke="#A9ACC4" stroke-width="1.3" stroke-linejoin="round"/></svg></div>
<div class="a" style="left:287px;top:0;width:1px;height:40px;background:#E3E4F6"></div>
<div class="a" style="left:488px;top:0;width:1px;height:40px;background:#E3E4F6"></div>
<div class="a" style="left:689px;top:0;width:1px;height:40px;background:#E3E4F6"></div>
<div class="a" style="left:890px;top:0;width:1px;height:40px;background:#E3E4F6"></div>
<div class="a" style="left:1091px;top:0;width:1px;height:40px;background:#E3E4F6"></div>
<div class="a" style="left:1292px;top:0;width:1px;height:40px;background:#E3E4F6"></div>
<div class="ct" style="left:96px">Aug 28, 2024</div>
<div class="ct" style="left:298px">Alexa Hall</div>
<div class="ct" style="left:499px;width:182px;overflow:hidden">alexahall@example.com</div>
<div class="ct" style="left:700px;font-size:13.4px">(262) 435-1768</div>
<div class="a" style="left:901px;top:0;width:180px;height:40px;overflow:hidden"><div class="tags">
<div class="tag" style="background:#DDD4FD">Preparing for a Road Trip</div>
<div class="tag" style="background:#D3D6DF">Oil</div>
</div></div>
<div class="a" style="left:1102px;top:0;width:180px;height:40px;overflow:hidden"><div class="tags">
<div class="tag" style="background:#FFD6CB;color:#1D1D1D">Email</div>
</div></div>
<div class="ct" style="left:1303px">Need assistance with</div>
</div>
<div class="row" style="top:533px">
<div class="rn"></div>
<div class="a nw" style="left:0;width:41px;top:12px;text-align:center;font-size:13px;color:#8B8EA8;line-height:17px">14</div>
<div class="a" style="left:43px;top:10px"><svg width="20" height="19" viewBox="0 0 20 19" ><path d="M10 1.2 L12.6 6.9 L18.8 7.5 L14.1 11.6 L15.5 17.8 L10 14.6 L4.5 17.8 L5.9 11.6 L1.2 7.5 L7.4 6.9 Z" fill="#fff" stroke="#A9ACC4" stroke-width="1.3" stroke-linejoin="round"/></svg></div>
<div class="a" style="left:287px;top:0;width:1px;height:40px;background:#E3E4F6"></div>
<div class="a" style="left:488px;top:0;width:1px;height:40px;background:#E3E4F6"></div>
<div class="a" style="left:689px;top:0;width:1px;height:40px;background:#E3E4F6"></div>
<div class="a" style="left:890px;top:0;width:1px;height:40px;background:#E3E4F6"></div>
<div class="a" style="left:1091px;top:0;width:1px;height:40px;background:#E3E4F6"></div>
<div class="a" style="left:1292px;top:0;width:1px;height:40px;background:#E3E4F6"></div>
<div class="ct" style="left:96px">Aug 28, 2024</div>
<div class="ct" style="left:298px">Alexa Gray</div>
<div class="ct" style="left:499px;width:182px;overflow:hidden">alexagray@example.com</div>
<div class="ct" style="left:700px;font-size:13.4px">(540) 758-3491</div>
<div class="a" style="left:901px;top:0;width:180px;height:40px;overflow:hidden"><div class="tags">
<div class="tag" style="background:#FFD6CB">Strange Noise or Vibration</div>
</div></div>
<div class="a" style="left:1102px;top:0;width:180px;height:40px;overflow:hidden"><div class="tags">
<div class="tag" style="background:#FECD9D;color:#1D1D1D">Phone</div>
</div></div>
<div class="ct" style="left:1303px">Please provide a reminder</div>
</div>
</div>
<div class="a" style="left:287px;top:221px;width:7px;height:589px;background:linear-gradient(to right,rgba(0,0,0,.07),rgba(0,0,0,0))"></div>
<div class="a" style="left:0;top:775px;width:1440px;height:35px;background:#F8F8FE;border-top:1px solid #E3E4F6"></div>
<div class="a" style="left:0;top:776px;width:85px;height:34px;background:#F3F3FE"></div>
<div class="a" style="left:85px;top:776px;width:1px;height:34px;background:#E3E4F6"></div>
<div class="a" style="left:286px;top:776px;width:1px;height:34px;background:#E3E4F6"></div>
<div class="a nw" style="left:14px;top:786px;font-size:12px;color:#2B2F4A;line-height:14px">Total <b>20</b></div>
<div class="a" style="left:288px;top:768px;width:1152px;height:7px;background:rgba(228,228,228,.85)"></div>
<div class="a" style="left:288px;top:768px;width:660px;height:7px;border-radius:3.5px;background:rgba(0,0,0,.54)"></div>
<div class="a" style="left:1432px;top:221px;width:8px;height:547px;background:rgba(228,228,228,.85)"></div>
<div class="a" style="left:1432px;top:221px;width:8px;height:358px;border-radius:4px;background:rgba(0,0,0,.54)"></div>
<div class="menu" style="left:109px;top:114px;width:248px;height:521px">
<div class="a" style="left:8px;top:135px;width:232px;height:36px;border-radius:4px;background:#454C80"></div>
<div class="sep" style="top:131px"></div>
<div class="sep" style="top:175px"></div>
<div class="sep" style="top:340px"></div>
<div class="sep" style="top:385px"></div>
<div class="sep" style="top:470px"></div>
<div class="mi" style="top:8px"><span class="t">Manage columns</span></div>
<div class="mi" style="top:48px"><span class="t">Tab colors</span></div>
<div class="a" style="left:221px;top:63px"><svg width="8" height="11" viewBox="0 0 8 11" ><path d="M1 1 L6 5.25 L1 9.5" stroke="#fff" stroke-width="1.4" fill="none"/></svg></div>
<div class="mi" style="top:88px"><span class="t">Lock all data</span></div>
<div class="mi" style="top:133px"><span class="t">Form</span></div>
<div class="a" style="left:221px;top:148px"><svg width="8" height="11" viewBox="0 0 8 11" ><path d="M1 1 L6 5.25 L1 9.5" stroke="#fff" stroke-width="1.4" fill="none"/></svg></div>
<div class="mi" style="top:178px"><span class="t">Rename</span></div>
<div class="mi" style="top:218px"><span class="t">Duplicate</span></div>
<div class="mi" style="top:258px"><span class="t">Change type</span></div>
<div class="a" style="left:221px;top:273px"><svg width="8" height="11" viewBox="0 0 8 11" ><path d="M1 1 L6 5.25 L1 9.5" stroke="#fff" stroke-width="1.4" fill="none"/></svg></div>
<div class="mi" style="top:298px"><span class="t">Add tab note</span></div>
<div class="mi" style="top:343px"><span class="t">Download</span></div>
<div class="a" style="left:221px;top:358px"><svg width="8" height="11" viewBox="0 0 8 11" ><path d="M1 1 L6 5.25 L1 9.5" stroke="#fff" stroke-width="1.4" fill="none"/></svg></div>
<div class="mi" style="top:388px"><span class="t">Archived entries</span></div>
<div class="mi" style="top:428px"><span class="t">Trashed entries</span></div>
<div class="mi" style="top:473px"><span class="t">Reset columns to default</span></div>
<div class="a" style="left:16px;top:19.7px"><svg width="16" height="16" viewBox="0 0 16 16" ><path d="M7.31 1.03 L8.69 1.03 L9.65 2.55 L10.69 2.97 L12.44 2.59 L13.41 3.56 L13.03 5.31 L13.45 6.35 L14.97 7.31 L14.97 8.69 L13.45 9.65 L13.03 10.69 L13.41 12.44 L12.44 13.41 L10.69 13.03 L9.65 13.45 L8.69 14.97 L7.31 14.97 L6.35 13.45 L5.31 13.03 L3.56 13.41 L2.59 12.44 L2.97 10.69 L2.55 9.65 L1.03 8.69 L1.03 7.31 L2.55 6.35 L2.97 5.31 L2.59 3.56 L3.56 2.59 L5.31 2.97 L6.35 2.55 Z" fill="#fff" stroke="#fff" stroke-width="0.5" stroke-linejoin="round"/><circle cx="8" cy="8" r="2.8" fill="#262B5B"/></svg></div>
<div class="a" style="left:17px;top:60px"><svg width="14" height="16" viewBox="0 0 14 16" ><path d="M7 0.8 C5 3.5 0.8 7.5 0.8 10.2 A6.2 6.2 0 0 0 13.2 10.2 C13.2 7.5 9 3.5 7 0.8 Z" fill="#fff"/></svg></div>
<div class="a" style="left:18px;top:101px"><svg width="12" height="14" viewBox="0 0 12 14" ><path d="M3 6.5 V4.5 A3 3 0 0 1 9 4.5 V6.5" stroke="#fff" stroke-width="2" fill="none"/><rect x="0.5" y="6" width="11" height="7.6" rx="1.6" fill="#fff"/></svg></div>
<div class="a" style="left:18px;top:145px"><svg width="12" height="16" viewBox="0 0 12 16" ><rect x="0.2" y="0.4" width="11.8" height="14.9" rx="2.6" fill="#fff"/><path d="M2.6 5 H9.6 M2.6 7.6 H9.6 M2.6 10.3 H9.6" stroke="#454C80" stroke-width="1.4"/></svg></div>
<div class="a" style="left:17px;top:191px"><svg width="15" height="15" viewBox="0 0 15 15" ><path d="M6 1.2 H3 Q1 1.2 1 3.2 V11.2 Q1 13.2 3 13.2 H11 Q13 13.2 13 11.2 V8" stroke="#C9CBDA" stroke-width="1.6" fill="none" stroke-linecap="round"/><path d="M6.3 8.6 L6.8 6.4 L11.4 1.8 Q12.2 1 13 1.8 Q13.8 2.6 13 3.4 L8.4 8 Z" stroke="#C9CBDA" stroke-width="1.3" fill="none" stroke-linejoin="round"/></svg></div>
<div class="a" style="left:16px;top:230px"><svg width="16" height="16" viewBox="0 0 16 16" ><rect x="0.5" y="0.5" width="9.5" height="9.5" rx="2.2" fill="#fff"/><rect x="3.8" y="3.8" width="12" height="12" rx="2.4" fill="#262B5B"/><rect x="5" y="5" width="10" height="10" rx="2.2" fill="#fff"/></svg></div>
<div class="a" style="left:17px;top:271px"><svg width="15" height="15" viewBox="0 0 15 15" ><path d="M1.3 7 A5.8 5.8 0 0 1 11.6 3.6" stroke="#fff" stroke-width="1.5" fill="none"/><path d="M13.7 2.2 L12.7 5.7 L9.9 4.5 Z" fill="#fff"/><path d="M12.9 7 A5.8 5.8 0 0 1 2.6 10.4" stroke="#fff" stroke-width="1.5" fill="none"/><path d="M0.5 11.8 L1.5 8.3 L4.3 9.5 Z" fill="#fff"/></svg></div>
<div class="a" style="left:17px;top:311px"><svg width="15" height="15" viewBox="0 0 15 15" ><path d="M2.8 0.2 H11.3 Q13.8 0.2 13.8 2.7 V6.4 L7.4 13.75 H2.8 Q0.3 13.75 0.3 11.25 V2.7 Q0.3 0.2 2.8 0.2 Z" fill="#fff"/><path d="M7.2 7.2 H12 L7.2 12 Z" fill="#262B5B"/></svg></div>
<div class="a" style="left:17px;top:356px"><svg width="14" height="15" viewBox="0 0 14 15" ><path d="M6.7 0.5 V10 M2.4 5.8 L6.7 10.1 L11 5.8" stroke="#C9CBDA" stroke-width="1.5" fill="none"/><path d="M0.3 12.8 H13.4" stroke="#C9CBDA" stroke-width="1.6"/></svg></div>
<div class="a" style="left:16px;top:401px"><svg width="15" height="14" viewBox="0 0 15 14" ><rect x="0" y="0.3" width="14.8" height="3.8" rx="0.8" fill="#fff"/><rect x="1.3" y="4.9" width="12.2" height="8.6" rx="1.6" fill="#fff"/><path d="M7.4 6.6 V9.6 M5.6 8.2 L7.4 10 L9.2 8.2" stroke="#262B5B" stroke-width="1.4" fill="none"/></svg></div>
<div class="a" style="left:16px;top:441px"><svg width="15" height="14" viewBox="0 0 15 14" ><rect x="0" y="0" width="14.8" height="3.8" rx="0.8" fill="#fff"/><rect x="1.3" y="4.6" width="12.2" height="9.2" rx="1.6" fill="#fff"/><path d="M4.8 8.4 H10" stroke="#262B5B" stroke-width="1.6"/></svg></div>
<div class="a" style="left:17px;top:485px"><svg width="15" height="16" viewBox="0 0 15 16" ><path d="M1.2 8.6 A6 6 0 1 0 6.4 2.05" stroke="#fff" stroke-width="1.5" fill="none"/><path d="M2.7 0.5 L2.3 4.2 L6.4 3.4 Z" fill="#fff"/></svg></div>
</div>
<div class="menu" style="left:361px;top:247px;width:288px;height:176px">
<div class="mi" style="top:8px"><span class="t">View Form</span></div>
<div class="mi" style="top:48px"><span class="t">Assign Form</span></div>
<div class="mi" style="top:88px"><span class="t">Edit Form</span></div>
<div class="mi" style="top:128px"><span class="t">Auto-Delete Submission</span></div>
<div class="a" style="left:16px;top:20px"><svg width="16" height="16" viewBox="0 0 16 16" ><path d="M6 2.6 H3.4 Q1.6 2.6 1.6 4.4 V12.6 Q1.6 14.4 3.4 14.4 H11.4 Q13.2 14.4 13.2 12.6 V9.6" stroke="#C9CBDA" stroke-width="1.6" fill="none" stroke-linecap="round"/><path d="M8.4 7.6 L14.4 1.6 M10.2 1.5 H14.6 V5.9" stroke="#C9CBDA" stroke-width="1.6" fill="none"/></svg></div>
<div class="a" style="left:16px;top:62px"><svg width="17" height="13" viewBox="0 0 17 13" ><circle cx="10.6" cy="2.9" r="2.7" fill="#fff"/><path d="M5.6 12.2 Q5.6 6.6 10.6 6.6 Q15.6 6.6 15.6 12.2 Z" fill="#fff"/><circle cx="5" cy="5" r="1.8" fill="#fff"/><path d="M1.2 12 Q1.4 8.8 3.6 8 L5 9 L2.6 12.2 Z" fill="#fff"/></svg></div>
<div class="a" style="left:16px;top:100px"><svg width="16" height="16" viewBox="0 0 16 16" ><path d="M6 1.6 H3.4 Q1.6 1.6 1.6 3.4 V12.4 Q1.6 14.4 3.4 14.4 H12 Q13.8 14.4 13.8 12.4 V9" stroke="#C9CBDA" stroke-width="1.6" fill="none" stroke-linecap="round"/><path d="M7.2 9.6 L7.6 7.4 L12.2 2.8 Q13 2 13.8 2.8 Q14.6 3.6 13.8 4.4 L9.2 9 Z" stroke="#C9CBDA" stroke-width="1.3" fill="none" stroke-linejoin="round"/></svg></div>
<div class="a" style="left:17px;top:140px"><svg width="16" height="17" viewBox="0 0 16 17" ><rect x="0.9" y="0.8" width="12.5" height="2.4" rx="1" fill="#fff"/><path d="M2.4 4 H12 L11.4 13.6 Q11.3 15.2 9.8 15.2 H4.6 Q3.1 15.2 3 13.6 Z" fill="#fff"/><circle cx="11.6" cy="11.2" r="4.2" fill="#262B5B"/><circle cx="11.6" cy="11.2" r="3.3" fill="#fff"/><path d="M11.4 9.4 V11.4 H13" stroke="#262B5B" stroke-width="1.1" fill="none"/><path d="M5.6 7 V12.5" stroke="#262B5B" stroke-width="1.1"/></svg></div>
<div class="a" style="left:211px;top:140px;width:61px;height:16px;border-radius:3px;background:#6D70A8;color:#fff;font-size:9px;font-weight:700;line-height:16px;text-align:center">DISABLED</div>
</div>
<div class="a" style="left:0;top:0"><svg width="260" height="300" viewBox="0 0 260 300" ><path d="M134 89.8 L197.6 89.8 L193.6 81.2 L228.6 93.2 L193.6 105.1 L197.6 96.1 L134 96.1 Z" fill="#FF6100" style="filter:drop-shadow(0.5px 0.8px 0.6px rgba(0,0,0,.35))"/></svg></div>
<div class="a" style="left:0;top:0"><svg width="260" height="300" viewBox="0 0 260 300" ><path d="M29 263 L92.6 263 L88.4 254.9 L123.8 266.6 L88.4 278.6 L92.6 269.8 L29 269.8 Z" fill="#FF6100" style="filter:drop-shadow(0.5px 0.8px 0.6px rgba(0,0,0,.35))"/></svg></div>
</body></html>
